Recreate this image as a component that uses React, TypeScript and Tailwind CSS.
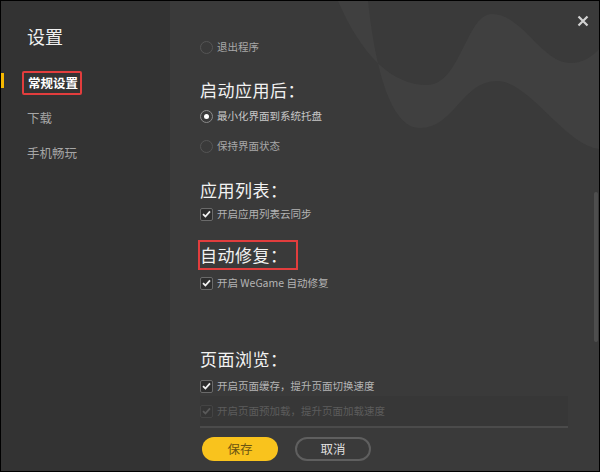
const font = { fontFamily: '"Noto Sans CJK SC", "Noto Sans", sans-serif' };

function Radio({ checked, label }: { checked?: boolean; label: string }) {
  return (
    <div className="flex items-center h-[20px]">
      <span
        className={`w-[13px] h-[13px] rounded-full border flex items-center justify-center ${
          checked ? "border-[#8a8a8a]" : "border-[#555555]"
        }`}
      >
        {checked && <span className="w-[5px] h-[5px] rounded-full bg-white" />}
      </span>
      <span className={`ml-[4px] text-[10.5px] ${checked ? "text-[#c8c8c8]" : "text-[#a8a8a8]"}`}>{label}</span>
    </div>
  );
}

function Check({ label, faded }: { label: string; faded?: boolean }) {
  return (
    <div className="flex items-center h-[20px]">
      <span
        className={`w-[13px] h-[13px] rounded-[2px] border flex items-center justify-center ${
          faded ? "border-[#444444] bg-[#353535]" : "border-[#6a6a6a] bg-[#2e2e2e]"
        }`}
      >
        <svg width="9" height="8" viewBox="0 0 9 8">
          <path
            d="M1 4.2 L3.4 6.5 L8 1.3"
            fill="none"
            stroke={faded ? "#5a5a5a" : "#f2f2f2"}
            strokeWidth="1.8"
          />
        </svg>
      </span>
      <span className={`ml-[4px] text-[10.5px] ${faded ? "text-[#5c5c5c]" : "text-[#b4b4b4]"}`}>{label}</span>
    </div>
  );
}

function Heading({ children }: { children: string }) {
  return <div className="h-[20px] leading-[20px] text-[17px] text-[#f2f2f2] tracking-[0.5px]">{children}</div>;
}

export default function App() {
  return (
    <div style={font} className="w-[600px] h-[472px] border border-black flex bg-[#3a3a3a]">
      <aside className="w-[169px] bg-[#333333] flex flex-col">
        <div className="pt-[23px] pl-[26px] text-[18px] leading-[24px] text-[#f0f0f0]">设置</div>
        <div className="relative mt-[23px] h-[24px] flex items-center">
          <span className="absolute left-0 top-[2px] w-[3px] h-[15px] bg-[#f6b800]" />
          <span className="ml-[21px] h-[24px] w-[60px] border-2 border-[#e23d3d] rounded-[2px] pl-[4px] flex items-center text-[12.5px] font-bold text-white">
            常规设置
          </span>
        </div>
        <div className="mt-[11px] h-[24px] flex items-center pl-[26px] text-[12.5px] text-[#a6a6a6]">下载</div>
        <div className="mt-[11px] h-[24px] flex items-center pl-[26px] text-[12.5px] text-[#a6a6a6]">手机畅玩</div>
      </aside>

      <main className="relative flex-1 overflow-hidden">
        <svg className="absolute inset-0" width="429" height="470" viewBox="0 0 429 470">
          <path
            d="M168 0 C192 55, 222 84, 257 84 C291 84, 296 13, 322 13 C352 13, 372 62, 400 62 C414 62, 424 54, 430 47 L430 148 C395 145, 360 80, 327 80 C292 80, 284 127, 250 127 C220 127, 205 65, 198 0 Z"
            fill="#404040"
          />
        </svg>

        <button className="absolute left-[407px] top-[14px] w-[12px] h-[12px]">
          <svg width="12" height="12" viewBox="0 0 12 12">
            <path d="M1.5 1.5 L10.5 10.5 M10.5 1.5 L1.5 10.5" stroke="#d2d2d2" strokeWidth="2.2" />
          </svg>
        </button>

        <div className="absolute left-[424px] top-[191px] w-[4px] h-[150px] rounded-full bg-[#4e4e4e]" />

        <div className="relative flex flex-col pl-[30px] pt-[36px]">
          <Radio label="退出程序" />
          <div className="mt-[23px]">
            <Heading>启动应用后：</Heading>
          </div>
          <div className="mt-[6px]">
            <Radio checked label="最小化界面到系统托盘" />
          </div>
          <div className="mt-[10px]">
            <Radio label="保持界面状态" />
          </div>
          <div className="mt-[24px]">
            <Heading>应用列表：</Heading>
          </div>
          <div className="mt-[4px]">
            <Check label="开启应用列表云同步" />
          </div>
          <div className="mt-[16px] -ml-[2px] w-[100px] h-[30px] border-2 border-[#e23d3d] flex items-center text-[17px] text-[#f2f2f2] tracking-[0.5px]">
            自动修复：
          </div>
          <div className="mt-[3px]">
            <Check label="开启 WeGame 自动修复" />
          </div>
          <div className="mt-[56px]">
            <Heading>页面浏览：</Heading>
          </div>
          <div className="mt-[7px]">
            <Check label="开启页面缓存，提升页面切换速度" />
          </div>
          <div className="w-[368px] h-[30px] bg-[#373737] flex items-center">
            <Check faded label="开启页面预加载，提升页面加载速度" />
          </div>
          <div className="w-[368px] h-[2px] bg-[#4b4b4b]" />
          <div className="mt-[9px] flex items-center gap-[17px] pl-[2px]">
            <button className="w-[76px] h-[24px] rounded-full bg-[#f9c31d] text-[12.5px] text-[#6b5412]">保存</button>
            <button className="w-[76px] h-[24px] rounded-full border-2 border-[#5f5f5f] text-[12.5px] text-[#dedede]">
              取消
            </button>
          </div>
        </div>
      </main>
    </div>
  );
}
